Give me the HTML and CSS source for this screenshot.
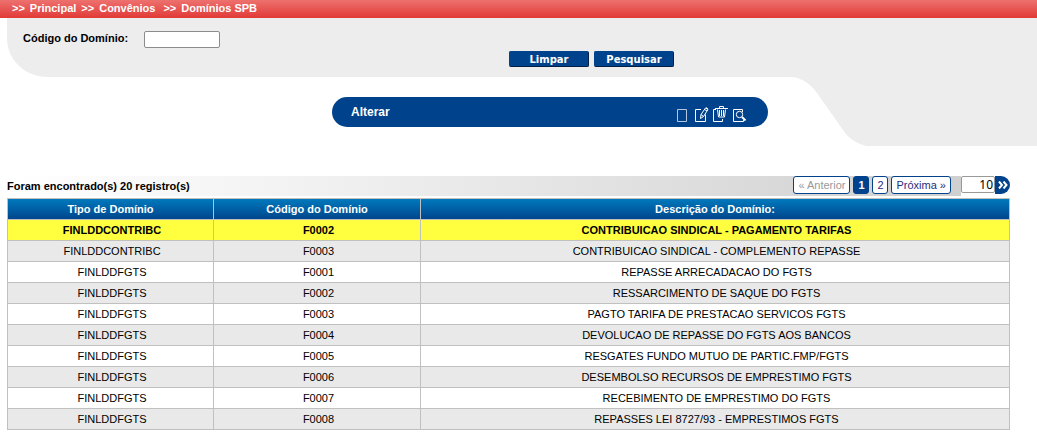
FILE: index.html
```html
<!DOCTYPE html>
<html lang="pt-BR">
<head>
<meta charset="utf-8">
<title>Domínios SPB</title>
<link rel="stylesheet" href="styles.css">
</head>
<body>
<nav class="crumbs"><span>&gt;&gt;</span><span>Principal</span><span>&gt;&gt;</span><span>Convênios</span><span class="wide">&gt;&gt;</span><span>Domínios SPB</span></nav>
<header class="top">
  <svg class="shape" width="1037" height="129" viewBox="0 0 1037 129"><path fill="#ededed" d="M7 0H1037V128H866C856 125 849 121 843 112L817 75C810 65 800 59 790 59H48C25 59 7 42 7 20Z"/></svg>
  <form class="search">
    <label for="codigo">Código do Domínio:</label>
    <input id="codigo" class="code" type="text">
  </form>
  <div class="buttons"><button>Limpar</button><button>Pesquisar</button></div>
  <div class="actions">
    <span class="action-title">Alterar</span>
    <svg class="icons" width="74" height="18" viewBox="0 0 74 18" fill="none" stroke="#fff" stroke-width="1">
      <path stroke="#b4c6de" d="M1.500 4.500h9v12h-9z"/>
      <path d="M25 4.500h-5.500v12h10V9.500M24.500 13.500l.5-4 4.500-6.500 2.500 1.500-4.500 7-3 2zM25 9.500l2.500 2M28.500 4.500l2.500 1.500M30 2.500l2 1.500"/>
      <path d="M40 4.500h-2.500v12h9V14M39 3.500h13M43.500 3V1.500h4V3M41.500 4.500l1 7.500h6l1-7.500M43.500 5v6M45.500 5v6M47.500 5v6"/>
      <path d="M66.500 7V4.500h-9v12h10V15"/><circle cx="63.500" cy="9.500" r="3.200"/><path stroke-width="2" d="M66 12l3.500 3.500"/>
    </svg>
  </div>
</header>
<main>
  <div class="bar">
    <div class="found"><span class="count">Foram encontrado(s) 20 registro(s)</span>
      <div class="pager"><a class="off">« Anterior</a><a class="num on">1</a><a class="num">2</a><a>Próxima »</a></div>
    </div>
    <div class="size"><input type="text" value="10"><button class="go"><svg width="10" height="8" viewBox="0 0 10 8" fill="none" stroke="#fff" stroke-width="2"><path d="M1 .5L4 4 1 7.500M5.500.5l3 3.500-3 3.500"/></svg></button></div>
  </div>
  <table>
    <colgroup><col class="c1"><col class="c2"><col class="c3"></colgroup>
    <thead><tr><th>Tipo de Domínio</th><th>Código do Domínio</th><th>Descrição do Domínio:</th></tr></thead>
    <tbody>
      <tr class="sel"><td>FINLDDCONTRIBC</td><td>F0002</td><td>CONTRIBUICAO SINDICAL - PAGAMENTO TARIFAS</td></tr>
      <tr><td>FINLDDCONTRIBC</td><td>F0003</td><td>CONTRIBUICAO SINDICAL - COMPLEMENTO REPASSE</td></tr>
      <tr><td>FINLDDFGTS</td><td>F0001</td><td>REPASSE ARRECADACAO DO FGTS</td></tr>
      <tr><td>FINLDDFGTS</td><td>F0002</td><td>RESSARCIMENTO DE SAQUE DO FGTS</td></tr>
      <tr><td>FINLDDFGTS</td><td>F0003</td><td>PAGTO TARIFA DE PRESTACAO SERVICOS FGTS</td></tr>
      <tr><td>FINLDDFGTS</td><td>F0004</td><td>DEVOLUCAO DE REPASSE DO FGTS AOS BANCOS</td></tr>
      <tr><td>FINLDDFGTS</td><td>F0005</td><td>RESGATES FUNDO MUTUO DE PARTIC.FMP/FGTS</td></tr>
      <tr><td>FINLDDFGTS</td><td>F0006</td><td>DESEMBOLSO RECURSOS DE EMPRESTIMO FGTS</td></tr>
      <tr><td>FINLDDFGTS</td><td>F0007</td><td>RECEBIMENTO DE EMPRESTIMO DO FGTS</td></tr>
      <tr><td>FINLDDFGTS</td><td>F0008</td><td>REPASSES LEI 8727/93 - EMPRESTIMOS FGTS</td></tr>
    </tbody>
  </table>
</main>
</body>
</html>
```

FILE: styles.css
```css
* { box-sizing: border-box; }
body { margin: 0; height: 447px; overflow: hidden; background: #fff; color: #000; font: 11px "Liberation Sans", Arial, sans-serif; }
.crumbs { display: flex; gap: 5px; height: 18px; padding-left: 12px; color: #fff; font-weight: bold; line-height: 17px; background: linear-gradient(#ed716e, #e13a37); }
.crumbs .wide { margin-left: 3px; }
.top { position: relative; height: 158px; }
.shape { position: absolute; left: 0; top: 0; z-index: -1; }
.search { display: flex; height: 33px; padding: 13px 0 0 23px; font-weight: bold; }
.search label { width: 121px; line-height: 15px; }
.code { width: 76px; height: 17px; border: 1px solid #8c8c8c; border-radius: 2px; background: #fff; }
.buttons { display: flex; gap: 5px; padding-left: 509px; }
.buttons button { width: 80px; height: 16px; padding: 1px 0 0; border: 1px solid #00438c; border-right-color: #001f48; border-bottom-color: #001f48; border-radius: 2px; background: #00438c; color: #fff; font: bold 10px/13px "DejaVu Sans", Verdana, sans-serif; }
.actions { display: flex; justify-content: space-between; width: 436px; height: 30px; margin: 30px 0 0 332px; padding: 0 18px 0 19px; border-radius: 15px; background: #00438c; color: #fff; }
.action-title { font-size: 12px; font-weight: bold; line-height: 30px; }
.icons { margin: 8px 0 0; }
main { width: 1003px; margin-left: 7px; }
.bar { display: flex; height: 22px; }
.found { display: flex; justify-content: space-between; width: 954px; height: 20px; padding-right: 10px; background: linear-gradient(90deg, #fff, #f2f2f2 30%, #cfcfcf); }
.count { font-weight: bold; line-height: 20px; }
.pager { display: flex; gap: 3px; }
.pager a { height: 18px; padding: 0 4px; border: 1px solid #00438c; border-radius: 3px; background: #fff; color: #2b2b7c; font-size: 11px; line-height: 16px; }
.pager .off { color: #999; }
.pager .num { width: 16px; }
.pager .on { background: #00438c; color: #fff; font-weight: bold; }
.size { display: flex; }
.size input { width: 34px; height: 17px; padding: 0 1px; border: 1px solid #999; border-radius: 2px; font: 12px "Noto Sans", sans-serif; text-align: right; }
.go { display: flex; align-items: center; width: 15px; height: 18px; padding: 0 0 1px 3px; border: 0; border-radius: 0 9px 9px 0; background: #00438c; }
table { width: 1003px; table-layout: fixed; border-collapse: collapse; text-align: center; }
.c1 { width: 206px; }
.c2 { width: 207px; }
th, td { height: 21px; padding: 0; border: 1px solid #c0c0c0; line-height: 20px; }
td { padding-left: 3px; }
thead tr { background: linear-gradient(#0079bd, #00438a); color: #fff; }
tbody tr:nth-child(even) { background: #e9e9e9; }
tbody .sel { background: #ffff3f; font-weight: bold; }
```
